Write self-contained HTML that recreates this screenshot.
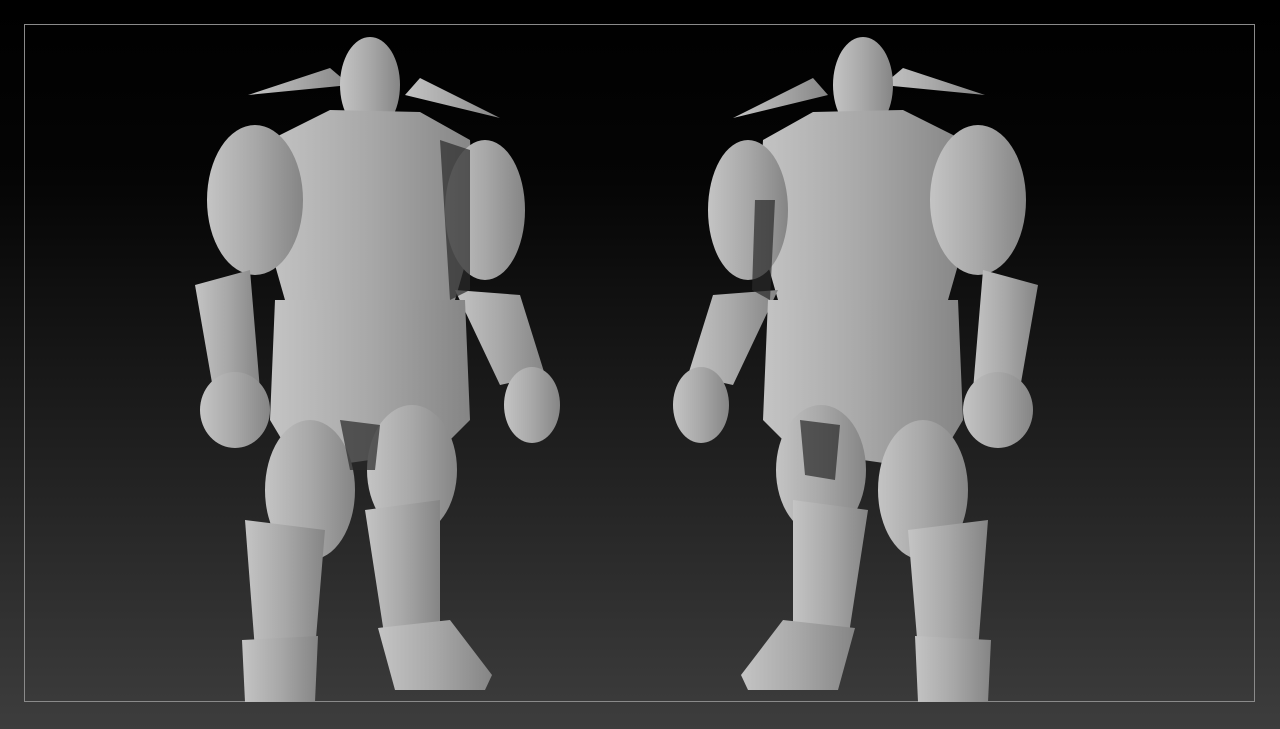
<!DOCTYPE html>
<html><head><style>
html,body{margin:0;padding:0;width:1280px;height:729px;overflow:hidden;background:linear-gradient(#000 0%,#050505 25%,#222 65%,#3d3d3d 100%);}
.frame{position:absolute;left:24px;top:24px;width:1231px;height:678px;border:1px solid #8a8a8a;box-sizing:border-box;}
svg{position:absolute;left:0;top:0}
</style></head><body>
<div class="frame"></div>
<svg width="1280" height="729" viewBox="0 0 1280 729">
<defs>
<linearGradient id="g" x1="0" x2="1" y1="0" y2="0"><stop offset="0" stop-color="#c4c4c4"/><stop offset="0.5" stop-color="#a8a8a8"/><stop offset="1" stop-color="#858585"/></linearGradient>
<linearGradient id="g2" x1="1" x2="0" y1="0" y2="0"><stop offset="0" stop-color="#c4c4c4"/><stop offset="0.5" stop-color="#a8a8a8"/><stop offset="1" stop-color="#858585"/></linearGradient>
<g id="fig">
<path d="M248 95 L330 68 L350 85 Z"/>
<path d="M500 118 L420 78 L405 95 Z"/>
<ellipse cx="370" cy="85" rx="30" ry="48"/>
<path d="M270 140 L330 110 L420 112 L470 140 L475 230 L455 300 L285 300 L265 230 Z"/>
<ellipse cx="255" cy="200" rx="48" ry="75"/>
<ellipse cx="485" cy="210" rx="40" ry="70"/>
<path d="M195 285 L250 270 L260 390 L215 400 Z"/>
<ellipse cx="235" cy="410" rx="35" ry="38"/>
<path d="M455 290 L520 295 L545 375 L500 385 Z"/>
<ellipse cx="532" cy="405" rx="28" ry="38"/>
<path d="M275 300 L465 300 L470 420 L440 450 L300 470 L270 420 Z"/>
<ellipse cx="310" cy="490" rx="45" ry="70"/>
<ellipse cx="412" cy="470" rx="45" ry="65"/>
<path d="M245 520 L325 530 L315 650 L255 650 Z"/>
<path d="M365 510 L440 500 L440 630 L385 640 Z"/>
<path d="M242 640 L318 636 L315 702 L245 702 Z"/>
<path d="M378 628 L450 620 L492 675 L485 690 L395 690 Z"/>
</g>
</defs>
<g fill="url(#g)"><use href="#fig"/></g>
<g fill="#2a2a2a" opacity="0.7">
<path d="M440 140 L470 150 L470 290 L450 300 Z"/>
<path d="M340 420 L380 425 L375 470 L350 470 Z"/>
</g>
<g fill="url(#g2)" transform="translate(1233,0) scale(-1,1)"><use href="#fig"/></g>
<g fill="#2a2a2a" opacity="0.7">
<path d="M755 200 L775 200 L770 300 L752 290 Z"/>
<path d="M800 420 L840 425 L835 480 L805 475 Z"/>
</g>
</svg>
</body></html>
